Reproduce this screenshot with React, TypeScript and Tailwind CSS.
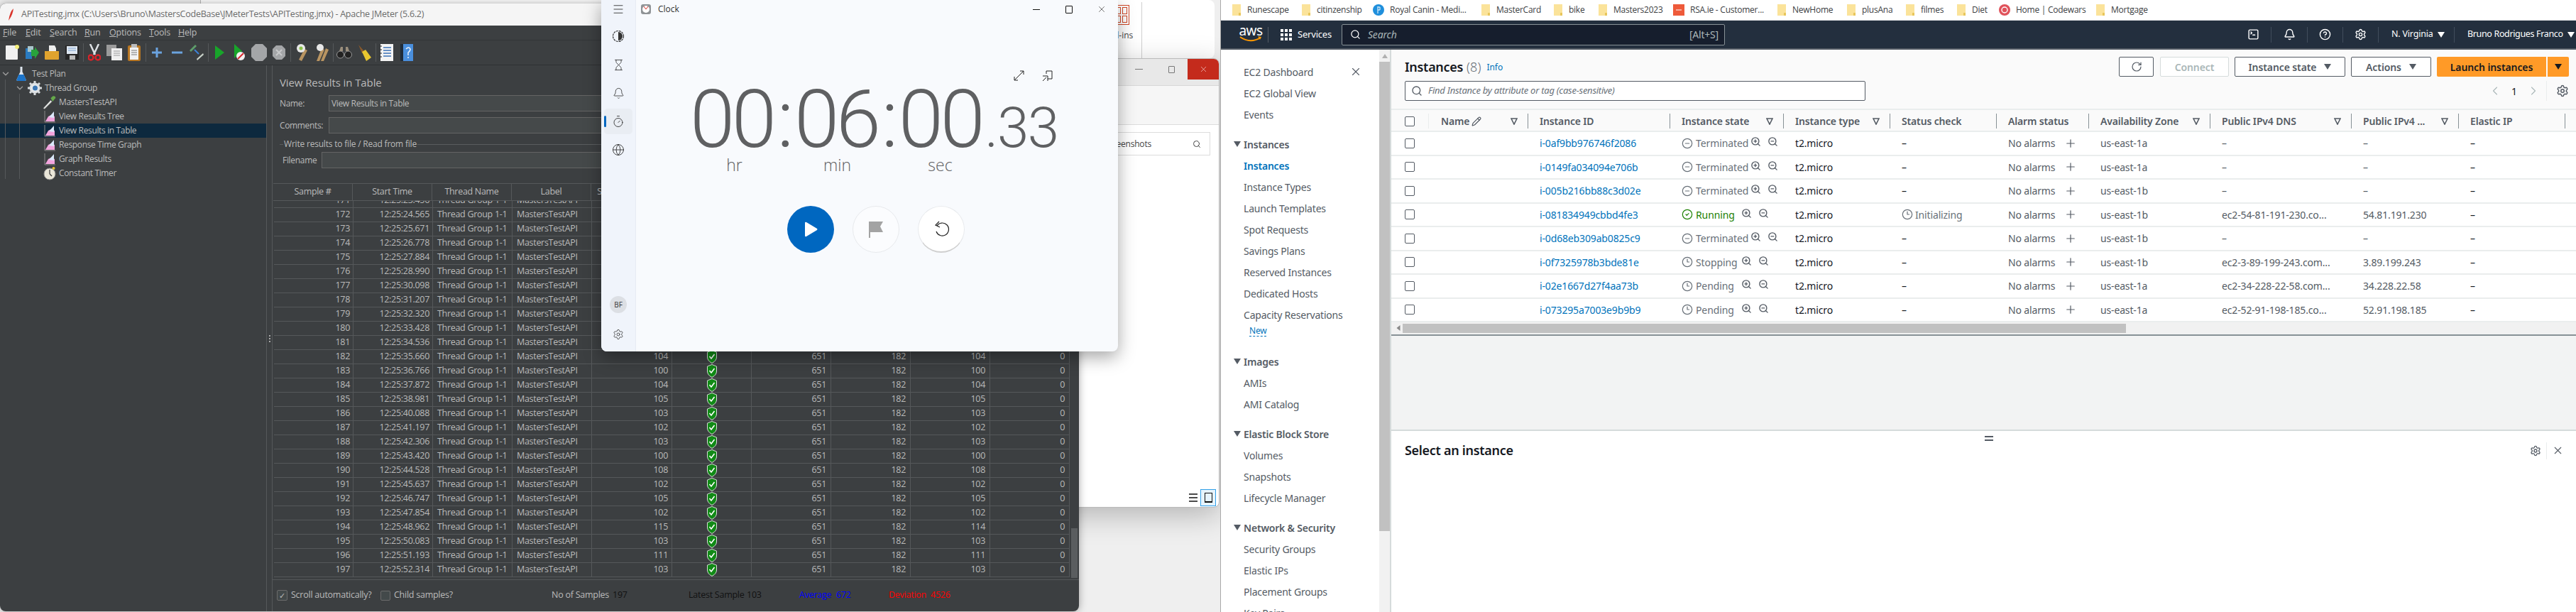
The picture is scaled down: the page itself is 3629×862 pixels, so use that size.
import React from "react";
import { Bell, ChevronDown, ChevronLeft, ChevronRight, CircleCheck, CircleHelp, CircleMinus, Clock3, Globe, Hourglass, Menu, Pencil, Plus, RotateCw, Search, Settings, SquareTerminal, Timer, X, ZoomIn, ZoomOut } from "lucide-react";

const JM = "font-['Open_Sans',sans-serif]";
const AW = "font-['Noto_Sans',sans-serif]";

function Flask() { return <svg width="16" height="22" viewBox="0 0 16 22"><path d="M6.5 1h3v7l5 11q.5 2-1.5 2H3q-2 0-1.5-2l5-11z" fill="#dfe7ef" /><path d="M4.5 12h7l3 7q.5 2-1.5 2H3q-2 0-1.5-2z" fill="#1c74c9" /></svg>; }
function Gear() { return <svg width="20" height="20" viewBox="0 0 20 20"><circle cx="10" cy="10" r="7.5" fill="#d8dcdf" /><g stroke="#d8dcdf" strokeWidth="3"><path d="M10 0v20M0 10h20M3 3l14 14M17 3L3 17" /></g><circle cx="10" cy="10" r="5.5" fill="#e7eaec" /><circle cx="10.500" cy="10" r="3.500" fill="#3b77b5" /></svg>; }
function Dropper() { return <svg width="20" height="20" viewBox="0 0 20 20"><path d="M1 19l11-12 2 2L3 20z" fill="#e9ecea" stroke="#777" strokeWidth=".6" /><path d="M12 4l3-3q2-1 4 1 1 2-1 3l-3 4z" fill="#65a84a" /></svg>; }
function Graph() { return <svg width="16" height="18" viewBox="0 0 16 18"><path d="M1 1v16h15" stroke="#8a8a8a" fill="none" /><path d="M2 16l4-7 4-2 5 2v7z" fill="#f2a4dd" /><path d="M7 10l7-8v9z" fill="#dbe9fb" /></svg>; }
function Stopwatch() { return <svg width="18" height="20" viewBox="0 0 18 20"><circle cx="9" cy="11" r="8" fill="#e9e6d9" stroke="#8d8d8d" /><path d="M9 11V5M9 11l3 3" stroke="#333" strokeWidth="1.2" /><circle cx="14.500" cy="3" r="2" fill="#e5c33a" /></svg>; }
function Shield() { return <svg width="14" height="19" viewBox="0 0 14 19"><path d="M7 .5l6.500 2.500v7q0 5-6.500 8.500Q.5 15 .5 10V3z" fill="#118a16" stroke="#d7dcd7" /><path d="M3.500 9l2.500 3 4.500-6" fill="none" stroke="#fff" strokeWidth="1.600" /></svg>; }

const tools: (React.ReactNode | null)[] = [
  <svg width="19" height="22" viewBox="0 0 19 22"><rect x="0" y="1" width="17" height="20" rx="1" fill="#f1f1f1" /><circle cx="16" cy="3" r="3" fill="#f3ee7a" /></svg>,
  <svg width="20" height="22" viewBox="0 0 20 22"><path d="M1 5h9v15H1z" fill="#2a7bc0" /><path d="M4 2h8v8H4z" fill="#a9c6cc" /><path d="M9 7h5V3l6 8-6 9v-4H9z" fill="#28a33c" /></svg>,
  <svg width="20" height="22" viewBox="0 0 20 22"><path d="M6 1h8l2 4v6H6z" fill="#eee" /><path d="M0 9h20v11q0 1-1 1H1q-1 0-1-1z" fill="#e0a32e" /></svg>,
  <svg width="19" height="22" viewBox="0 0 19 22"><path d="M0 1h19v20H0z" fill="#262626" /><path d="M2 2h15v11H2z" fill="#dfe7f1" /><path d="M6 15h8v6H6z" fill="#bbb" /><path d="M4 5h11M4 8h11" stroke="#7fa4cf" /></svg>,
  null,
  <svg width="18" height="24" viewBox="0 0 18 24"><path d="M3 0l7 15M15 0L8 15" stroke="#dfe2e6" strokeWidth="2.500" /><circle cx="4" cy="19" r="3.500" fill="none" stroke="#d8232a" strokeWidth="2.500" /><circle cx="14" cy="19" r="3.500" fill="none" stroke="#d8232a" strokeWidth="2.500" /></svg>,
  <svg width="22" height="22" viewBox="0 0 22 22"><path d="M0 0h14v16H0z" fill="#9a9a9a" /><path d="M7 5h15v17H7z" fill="#efefef" /><path d="M10 9h9M10 12h9M10 15h9" stroke="#999" /></svg>,
  <svg width="18" height="24" viewBox="0 0 18 24"><rect y="2" width="18" height="22" rx="2" fill="#b87723" /><path d="M3 5h12v17H3z" fill="#f2f2f2" /><path d="M5 9h8M5 12h8M5 15h8" stroke="#777" /><rect x="5" y="0" width="8" height="5" fill="#bbb" /></svg>,
  null,
  <svg width="16" height="16" viewBox="0 0 16 16"><path d="M8 1v14M1 8h14" stroke="#6ba3df" strokeWidth="3" /></svg>,
  <svg width="15" height="6" viewBox="0 0 15 6"><path d="M0 3h15" stroke="#6ba3df" strokeWidth="3" /></svg>,
  <svg width="22" height="24" viewBox="0 0 22 24"><path d="M1 9l8-8 2 2-8 8z" fill="#5e9e6b" /><path d="M12 23l9-8-1-2-9 8z" fill="#c9d2c9" /><path d="M8 8l6 6" stroke="#3c83d8" strokeWidth="2" /></svg>,
  null,
  <svg width="13" height="20" viewBox="0 0 13 20"><path d="M0 0l13 10L0 20z" fill="#18a52a" /></svg>,
  <svg width="15" height="24" viewBox="0 0 15 24"><path d="M0 0l11 10L0 20z" fill="#18a52a" /><circle cx="9" cy="17" r="6" fill="#f1f1f1" /><path d="M5 21l8-8" stroke="#d8232a" strokeWidth="2" /></svg>,
  <svg width="22" height="24" viewBox="0 0 22 24"><path d="M6 0h10l6 6v12l-6 6H6l-6-6V6z" fill="#a4a6a8" /></svg>,
  <svg width="18" height="20" viewBox="0 0 18 20"><path d="M5 0h8l5 5v10l-5 5H5l-5-5V5z" fill="#a4a6a8" /><path d="M5 6l8 8M13 6l-8 8" stroke="#c9cacb" strokeWidth="2" /></svg>,
  null,
  <svg width="20" height="24" viewBox="0 0 20 24"><path d="M6 22l8-15 4 2-8 15z" fill="#b89461" /><circle cx="9" cy="6" r="6" fill="#e8e8e8" /><circle cx="9" cy="6" r="2.500" fill="#8bc34a" /></svg>,
  <svg width="22" height="24" viewBox="0 0 22 24"><path d="M4 24l7-18 4 2-7 16zM10 24l7-18 4 2-7 16z" fill="#b89461" /><circle cx="9" cy="5" r="5" fill="#e8e8e8" /></svg>,
  null,
  <svg width="22" height="18" viewBox="0 0 22 18"><circle cx="5.500" cy="12" r="5" fill="#222" stroke="#999" /><circle cx="16.500" cy="12" r="5" fill="#222" stroke="#999" /><path d="M4 7l2-6h3v6zM18 7l-2-6h-3v6z" fill="#9a8e7c" /></svg>,
  <svg width="20" height="24" viewBox="0 0 20 24"><path d="M2 1l8 9-3 3z" fill="#8b5a2b" /><path d="M7 11l5-3 8 11-7 5z" fill="#e9c62f" /></svg>,
  null,
  <svg width="20" height="24" viewBox="0 0 20 24"><rect x="1" width="18" height="24" fill="#f4f4f4" /><path d="M5 5h11M5 9h11M5 13h11M5 17h11" stroke="#3a70b5" strokeWidth="1.500" /><path d="M0 3h3M0 8h3M0 13h3M0 18h3" stroke="#222" /></svg>,
  <svg width="18" height="24" viewBox="0 0 18 24"><rect width="18" height="24" fill="#4a8fdd" /><rect width="4" height="24" fill="#1f2c3a" /><path d="M8 7q4-4 6 0 0 3-3 5v4" fill="none" stroke="#eaf2fb" strokeWidth="1.500" /><path d="M11 18v2" stroke="#eaf2fb" strokeWidth="1.500" /></svg>,
];

const times = ["23.456", "24.565", "25.671", "26.778", "27.884", "28.990", "30.098", "31.207", "32.320", "33.428", "34.536", "35.660", "36.766", "37.872", "38.981", "40.088", "41.197", "42.306", "43.420", "44.528", "45.637", "46.747", "47.854", "48.962", "50.083", "51.193", "52.314"];
const sampleTimes = [104, 104, 103, 101, 102, 103, 104, 105, 100, 102, 103, 104, 100, 104, 105, 103, 102, 103, 100, 108, 102, 105, 102, 115, 103, 111, 103];

const treeRows = [
  { t: "MastersTestAPI", i: <Dropper /> },
  { t: "View Results Tree", i: <Graph /> },
  { t: "View Results in Table", i: <Graph />, sel: true },
  { t: "Response Time Graph", i: <Graph /> },
  { t: "Graph Results", i: <Graph /> },
  { t: "Constant Timer", i: <Stopwatch /> },
];

function JMeter() {
  return (
    <div className={`absolute left-0 top-[5px] bottom-px w-[1520px] rounded-lg overflow-hidden flex flex-col bg-[#3c3f41] text-[#bbbbbb] text-[12px] ${JM} shadow-[0_0_12px_rgba(0,0,0,0.35)]`}>
      <div className="h-[31px] shrink-0 bg-[#f5f5f5] flex items-center pl-[11px] gap-[10px] text-[#6b6b6b] text-[12.5px] tracking-[-0.25px]">
        <svg width="9" height="18" viewBox="0 0 9 18"><path d="M8 0Q3 4 1 17l2-3Q7 8 8 0z" fill="#d9342b" /></svg>
        <span>APITesting.jmx (C:\Users\Bruno\MastersCodeBase\JMeterTests\APITesting.jmx) - Apache JMeter (5.6.2)</span>
      </div>
      <div className="h-[21px] shrink-0 flex items-center pl-[4px] text-[12.5px] tracking-[-0.2px] border-b border-[#333638]">
        {[["F", "ile", "w-[32px]"], ["E", "dit", "w-[34px]"], ["S", "earch", "w-[49px]"], ["R", "un", "w-[35px]"], ["O", "ptions", "w-[56px]"], ["T", "ools", "w-[41px]"], ["H", "elp", "w-[40px]"]].map(([a, b, w]) => (
          <span key={a} className={w}><span className="underline">{a}</span>{b}</span>
        ))}
      </div>
      <div className="h-[35px] shrink-0 flex items-center pl-[3px] border-b border-[#2f3133]">
        {tools.map((t, i) => t === null ? (
          <div key={i} className="w-[4px] h-[26px] flex justify-center"><div className="w-px h-full bg-[#55585a]" /></div>
        ) : (
          <div key={i} className="w-[28px] flex justify-center items-center">{t}</div>
        ))}
      </div>
      <div className="flex flex-1 min-h-0">
        <div className="w-[375px] shrink-0 relative pt-[2px] text-[12px] tracking-[-0.35px]">
          <div className="absolute left-[7px] top-[20px] h-[140px] w-px bg-[#55585a]" />
          <div className="absolute left-[27px] top-[40px] h-[120px] w-px bg-[#55585a]" />
          <div className="h-[20px] flex items-center pl-[1px]"><ChevronDown size={14} strokeWidth={2.5} className="text-[#9a9a9a]" /><div className="w-[30px] flex justify-center"><Flask /></div><span>Test Plan</span></div>
          <div className="h-[20px] flex items-center pl-[21px]"><ChevronDown size={14} strokeWidth={2.5} className="text-[#9a9a9a]" /><div className="w-[28px] flex justify-center"><Gear /></div><span>Thread Group</span></div>
          {treeRows.map((r) => (
            <div key={r.t} className={`h-[20px] flex items-center pl-[60px] gap-[4px] ${r.sel ? "bg-[#0d293e]" : ""}`}>
              <div className="w-[19px] flex justify-center">{r.i}</div><span>{r.t}</span>
            </div>
          ))}
        </div>
        <div className="w-[9px] shrink-0 border-l border-r border-[#55585a] flex flex-col items-center gap-[2px] justify-center">
          <i className="w-[2px] h-[2px] bg-[#aaa]" /><i className="w-[2px] h-[2px] bg-[#aaa]" /><i className="w-[2px] h-[2px] bg-[#aaa]" />
        </div>
        <div className="flex-1 min-w-0 flex flex-col">
          <div className="h-[166px] shrink-0 relative pl-[10px] pr-[2px] pt-[13px]">
            <div className="text-[15px] leading-[22px] tracking-[-0.1px]">View Results in Table</div>
            <div className="flex items-center h-[23px] mt-[7px] text-[12px] tracking-[-0.35px]"><span className="w-[69px]">Name:</span><div className="flex-1 h-full border border-[#646464] bg-[#45494a] pl-[3px] flex items-center">View Results in Table</div></div>
            <div className="flex items-center h-[23px] mt-[8px] text-[12px] tracking-[-0.35px]"><span className="w-[69px]">Comments:</span><div className="flex-1 h-full border border-[#646464] bg-[#45494a]" /></div>
            <div className="flex items-center h-[18px] mt-[6px] text-[12px] tracking-[-0.2px] gap-[1px]"><div className="w-[5px] h-px bg-[#5a5d5f]" /><span>Write results to file / Read from file</span><div className="flex-1 h-px bg-[#5a5d5f]" /></div>
            <div className="flex items-center h-[23px] mt-[2px] pl-[4px] text-[12px] tracking-[-0.3px]"><span className="w-[55px]">Filename</span><div className="flex-1 h-full border border-[#646464] bg-[#45494a]" /></div>
          </div>
          <div className="grid grid-cols-[112px_112px_112px_112px_113px_112px_112px_112px_112px_112px] h-[25px] shrink-0 ml-px mr-[12px] border-y border-[#55585a] text-[12.5px] tracking-[-0.3px]">
            {["Sample #", "Start Time", "Thread Name", "Label", "Sample Time(ms)", "Status", "Bytes", "Sent Bytes", "Latency", "Connect Time(ms)"].map((h) => (
              <div key={h} className="border-r border-[#55585a] flex items-center justify-center whitespace-nowrap overflow-hidden">{h}</div>
            ))}
          </div>
          <div className="h-[531px] shrink-0 overflow-hidden flex">
            <div className="flex-1 ml-[2px] -mt-[10px]">
              {times.map((t, i) => (
                <div key={t} className="grid grid-cols-[112px_112px_112px_112px_113px_112px_112px_112px_112px_112px] h-[20px] items-center border-b border-[#55585a] text-[12.5px] tracking-[-0.3px] [&>div]:h-full [&>div]:flex [&>div]:items-center [&>div]:border-r [&>div]:border-[#55585a]">
                  <div className="justify-end pr-[4px]">{171 + i}</div>
                  <div className="justify-end pr-[4px]">{`12:25:${t}`}</div>
                  <div className="pl-[6px]">Thread Group 1-1</div>
                  <div className="pl-[6px]">MastersTestAPI</div>
                  <div className="justify-end pr-[5px]">{sampleTimes[i]}</div>
                  <div className="justify-center"><Shield /></div>
                  <div className="justify-end pr-[6px]">651</div>
                  <div className="justify-end pr-[6px]">182</div>
                  <div className="justify-end pr-[6px]">{sampleTimes[i] === 115 ? 114 : sampleTimes[i]}</div>
                  <div className="justify-end pr-[6px]">0</div>
                </div>
              ))}
            </div>
            <div className="w-[13px] shrink-0 flex flex-col justify-end pl-[2px] pr-[2px]"><div className="h-[70px] bg-[#5a5d5f]" /></div>
          </div>
          <div className="flex-1 border-t border-[#55585a] mt-[2px] flex items-center pl-[6px] text-[12.5px] tracking-[-0.25px] pb-[1px]">
            <span className="w-[15px] h-[15px] rounded-[2px] border border-[#6b6b6b] bg-[#43494a] flex items-center justify-center text-[11px] leading-none">✓</span>
            <span className="ml-[5px] w-[126px]">Scroll automatically?</span>
            <span className="w-[14px] h-[14px] rounded-[2px] border border-[#6b6b6b] bg-[#43494a]" />
            <span className="ml-[5px] w-[222px]">Child samples?</span>
            <span className="w-[86px]">No of Samples</span><span className="text-[#111] w-[107px]">197</span>
            <span className="text-[#111] w-[82px]">Latest Sample</span><span className="text-[#111] w-[74px]">103</span>
            <span className="text-[#0000ff] w-[52px]">Average</span><span className="text-[#0000ff] w-[74px]">672</span>
            <span className="text-[#ff0000] w-[59px]">Deviation</span><span className="text-[#ff0000]">4526</span>
          </div>
        </div>
      </div>
    </div>
  );
}

function ClockWin() {
  const rail = [<Hourglass key="f" size={17} strokeWidth={1.2} />, <Bell key="b" size={17} strokeWidth={1.2} />, <Timer key="t" size={18} strokeWidth={1.2} />, <Globe key="g" size={18} strokeWidth={1.2} />];
  return (
    <div className={`absolute left-[847px] top-0 w-[728px] h-[495px] rounded-b-lg flex bg-[#f8fafd] text-[#222] shadow-[0_8px_24px_rgba(0,0,0,0.35)] overflow-hidden ${JM}`}>
      <div className="w-[49px] shrink-0 bg-[#f0f4fb] border-r border-[#e6ebf3] flex flex-col items-center text-[#333]">
        <div className="h-[26px] flex items-center"><Menu size={18} strokeWidth={1.2} /></div>
        <div className="h-[40px] mt-[5px] flex items-center justify-center">
          <svg width="18" height="18" viewBox="0 0 18 18"><circle cx="9" cy="9" r="7.500" fill="none" stroke="#333" strokeWidth="1.200" strokeDasharray="3 1" /><path d="M9 3a6 6 0 0 1 0 12z" fill="#333" /></svg>
        </div>
        <div className="h-[40px] flex items-center">{rail[0]}</div>
        <div className="h-[40px] flex items-center">{rail[1]}</div>
        <div className="h-[40px] flex items-center"><div className="relative w-[40px] h-[36px] rounded-[5px] bg-[#e9edf3] flex items-center justify-center">{rail[2]}<div className="absolute left-0 top-[10px] h-[16px] w-[3px] rounded bg-[#0067c0]" /></div></div>
        <div className="h-[40px] flex items-center">{rail[3]}</div>
        <div className="mt-auto w-[24px] h-[24px] rounded-full bg-[#dcdfe4] flex items-center justify-center text-[10px]">BF</div>
        <div className="mt-[22px] mb-[16px]"><Settings size={16} strokeWidth={1.2} /></div>
      </div>
      <div className="flex-1 flex flex-col min-w-0">
        <div className="h-[26px] shrink-0 flex items-center pl-[7px] text-[12px]">
          <svg width="14" height="16" viewBox="0 0 14 16" className="mr-[10px]"><rect y="1" width="14" height="14" rx="3" fill="#8f9396" /><circle cx="7" cy="8" r="5" fill="#fff" /><path d="M7 8L4 4M7 8l3-4" stroke="#d9342b" /></svg>
          <span className="text-[#333]">Clock</span>
          <div className="ml-auto flex items-center text-[#111]">
            <div className="w-[46px] flex justify-center"><div className="w-[10px] h-[1px] bg-[#111]" /></div>
            <div className="w-[46px] flex justify-center"><div className="w-[10px] h-[11px] border border-[#111] rounded-[1px]" /></div>
            <div className="w-[46px] flex justify-center"><X size={14} strokeWidth={1} /></div>
          </div>
        </div>
        <div className="h-[20px] mt-[72px] shrink-0 flex justify-end pr-[91px] gap-[23px] text-[#222]">
          <svg width="17" height="17" viewBox="0 0 17 17" fill="none" stroke="#222"><path d="M2 10v5h5M15 7V2h-5M2 15L15 2" /></svg>
          <svg width="17" height="17" viewBox="0 0 17 17" fill="none" stroke="#222"><path d="M7 2h8v11H9M2 9h7v7M2 16l5-5M7 2v4" /></svg>
        </div>
        <div className="mt-[5px] ml-[76px] h-[90px] flex items-baseline text-[#5f6062] font-['Roboto',sans-serif] font-light leading-[90px] whitespace-nowrap">
          <span className="text-[114px] tracking-[-4.5px]">00<span className="mx-[5px]">:</span>06<span className="mx-[5px]">:</span>00</span>
          <span className="text-[80px] ml-[4px] tracking-[-1.5px]">.33</span>
        </div>
        <div className="grid grid-cols-[145px_145px_145px] ml-[66px] mt-[4px] text-[#5f6062] text-[23px] leading-[30px] text-center font-light">
          <span>hr</span><span>min</span><span>sec</span>
        </div>
        <div className="flex ml-[213px] mt-[43px] gap-[26px]">
          <div className="w-[66px] h-[66px] rounded-full bg-[#0067c0] flex items-center justify-center"><svg width="22" height="24" viewBox="0 0 22 24"><path d="M3 3q0-2 2-1l15 9q1 1 0 2L5 22q-2 1-2-1z" fill="#fff" /></svg></div>
          <div className="w-[66px] h-[66px] rounded-full bg-[#fbfcfe] border border-[#e8eaed] flex items-center justify-center"><svg width="22" height="26" viewBox="0 0 22 26"><path d="M2 2h19l-4 7 4 8H3v8H1V2z" fill="#a3a3a3" /></svg></div>
          <div className="w-[66px] h-[66px] rounded-full bg-white border border-[#e8eaed] border-b-2 border-b-[#cfcfcf] flex items-center justify-center"><svg width="24" height="26" viewBox="0 0 24 26" fill="none" stroke="#222" strokeWidth="1.200"><path d="M6 8a9 9 0 1 1-1 8" /><path d="M9 2L4 7l6 3" /></svg></div>
        </div>
      </div>
    </div>
  );
}

function Behind() {
  return (
    <>
      <div className={`absolute left-[282px] top-0 w-[1429px] h-[82px] bg-white border-l border-[#bbb] rounded-tr-lg rounded-br-lg flex justify-end text-[#444] text-[12px] ${JM}`}>
        <div className="flex flex-col w-[136px] items-start relative">
          <div className="mt-[7px] -ml-[16px] w-[32px] h-[28px] border border-[#d24726] grid grid-rows-2 grid-cols-3 p-[2px] gap-[2px]"><div className="border border-[#d24726]" /><div className="border border-[#d24726]" /><div className="border border-[#d24726]" /><div className="border border-[#d24726]" /><div className="border border-[#d24726]" /><div className="border border-[#d24726]" /></div>
          <span className="mt-[6px] -ml-[6px]">d-ins</span>
          <div className="absolute left-[33px] top-[3px] h-[79px] w-px bg-[#d0d0d0]" />
        </div>
      </div>
      <div className="absolute left-[1400px] top-[82px] w-[318px] h-[633px] bg-white rounded-t-lg rounded-br-lg border border-[#bbb] shadow-[0_10px_40px_rgba(0,0,0,0.25)] flex flex-col text-[#444] overflow-hidden">
        <div className="h-[38px] shrink-0 bg-[#e8e8e8] flex justify-end items-start border-b border-[#d8d8d8]">
          <div className="w-[46px] h-[29px] flex items-center justify-center"><div className="w-[11px] h-px bg-[#777]" /></div>
          <div className="w-[46px] h-[29px] flex items-center justify-center"><div className="w-[9px] h-[10px] border border-[#777] rounded-[1px]" /></div>
          <div className="w-[44px] h-[29px] bg-[#c42b1c] flex items-center justify-center"><X size={13} strokeWidth={1} className="text-white" /></div>
        </div>
        <div className="h-[55px] shrink-0 bg-[#f6f6f6] border-b border-[#dcdcdc]" />
        <div className={`h-[33px] mt-[10px] ml-[-5px] mr-[12px] shrink-0 border border-[#dcdcdc] flex items-center justify-end pr-[12px] text-[12px] tracking-[-0.2px] ${JM}`}>
          <span className="mr-[58px]">Screenshots</span><Search size={12} />
        </div>
        <div className="mt-auto flex justify-end items-center gap-[2px] pr-[4px] pb-[1px]">
          <svg width="16" height="16" viewBox="0 0 16 16"><path d="M2 3h12M2 8h12M2 13h12" stroke="#111" strokeWidth="1.400" /></svg>
          <div className="w-[22px] h-[24px] border border-[#30a0e8] bg-[#e5f3fd] flex items-center justify-center"><div className="w-[11px] h-[14px] border border-[#111] border-b-2" /></div>
        </div>
      </div>
    </>
  );
}

const marks = [
  ["f", "Runescape", "w-[98px]"], ["f", "citinzenship", "w-[101px]"], ["r", "Royal Canin - Medi...", "w-[152px]"], ["f", "MasterCard", "w-[102px]"], ["f", "bike", "w-[63px]"], ["f", "Masters2023", "w-[106px]"], ["s", "RSA.ie - Customer...", "w-[146px]"], ["f", "NewHome", "w-[98px]"], ["f", "plusAna", "w-[83px]"], ["f", "filmes", "w-[72px]"], ["f", "Diet", "w-[60px]"], ["c", "Home | Codewars", "w-[136px]"], ["f", "Mortgage", "w-[90px]"],
];

function MarkIcon({ k }: { k: string }) {
  if (k === "r") return <svg width="16" height="16" viewBox="0 0 16 16"><circle cx="8" cy="8" r="8" fill="#1f8fdc" /><path d="M7 3v10M7 4h3v4H7" stroke="#fff" fill="none" /></svg>;
  if (k === "s") return <svg width="16" height="16" viewBox="0 0 16 16"><rect width="16" height="16" fill="#ee5a3a" /><path d="M4 8h8" stroke="#fff" /></svg>;
  if (k === "c") return <svg width="16" height="16" viewBox="0 0 16 16"><circle cx="8" cy="8" r="8" fill="#e0525b" /><circle cx="8" cy="8" r="4" fill="none" stroke="#fff" strokeWidth="1.400" /></svg>;
  return <svg width="14" height="16" viewBox="0 0 14 16"><path d="M1 0h12v16H1z" fill="#fbe39a" /><path d="M10 12h3v4h-3z" fill="#e8c65c" /></svg>;
}

const sideNav: { g?: string; items: { t: string; blue?: boolean }[]; bold?: boolean }[] = [
  { items: [{ t: "EC2 Global View" }, { t: "Events" }] },
  { g: "Instances", items: [{ t: "Instances", blue: true }, { t: "Instance Types" }, { t: "Launch Templates" }, { t: "Spot Requests" }, { t: "Savings Plans" }, { t: "Reserved Instances" }, { t: "Dedicated Hosts" }, { t: "Capacity Reservations" }] },
  { g: "Images", items: [{ t: "AMIs" }, { t: "AMI Catalog" }] },
  { g: "Elastic Block Store", items: [{ t: "Volumes" }, { t: "Snapshots" }, { t: "Lifecycle Manager" }] },
  { g: "Network & Security", items: [{ t: "Security Groups" }, { t: "Elastic IPs" }, { t: "Placement Groups" }, { t: "Key Pairs" }] },
];

const cols = "grid grid-cols-[52px_140px_200px_160px_150px_150px_130px_171px_199px_151px_150px_16px]";
const headers: [string, boolean][] = [["Instance ID", false], ["Instance state", true], ["Instance type", true], ["Status check", false], ["Alarm status", false], ["Availability Zone", true], ["Public IPv4 DNS", true], ["Public IPv4 ...", true], ["Elastic IP", false]];
const rows = [
  ["i-0af9bb976746f2086", "Terminated", "us-east-1a", "–", "–"],
  ["i-0149fa034094e706b", "Terminated", "us-east-1a", "–", "–"],
  ["i-005b216bb88c3d02e", "Terminated", "us-east-1b", "–", "–"],
  ["i-081834949cbbd4fe3", "Running", "us-east-1b", "ec2-54-81-191-230.co...", "54.81.191.230"],
  ["i-0d68eb309ab0825c9", "Terminated", "us-east-1b", "–", "–"],
  ["i-0f7325978b3bde81e", "Stopping", "us-east-1b", "ec2-3-89-199-243.com...", "3.89.199.243"],
  ["i-02e1667d27f4aa73b", "Pending", "us-east-1a", "ec2-34-228-22-58.com...", "34.228.22.58"],
  ["i-073295a7003e9b9b9", "Pending", "us-east-1a", "ec2-52-91-198-185.co...", "52.91.198.185"],
];

function Filter() { return <svg width="10" height="10" viewBox="0 0 10 10"><path d="M1 1h8L5 9z" fill="none" stroke="#545b64" strokeWidth="1.600" /></svg>; }
function Caret({ c = "#545b64" }: { c?: string }) { return <svg width="10" height="8" viewBox="0 0 10 8"><path d="M0 0h10L5 8z" fill={c} /></svg>; }
function Check() { return <div className="w-[14px] h-[14px] rounded-[2px] border border-[#545b64] bg-white" />; }

function StateCell({ s }: { s: string }) {
  const term = s === "Terminated";
  return (
    <div className="flex items-center pl-[17px] text-[14px] text-[#687078]">
      {term ? <CircleMinus size={16} strokeWidth={1.8} className="text-[#687078] shrink-0" /> : s === "Running" ? <CircleCheck size={16} strokeWidth={1.8} className="text-[#1d8102] shrink-0" /> : <Clock3 size={16} strokeWidth={1.8} className="text-[#687078] shrink-0" />}
      <span className={`ml-[4px] tracking-[-0.1px] ${s === "Running" ? "text-[#1d8102]" : ""} ${term ? "w-[72px]" : "w-[58px]"}`}>{s}</span>
      <div className={`flex text-[#545b64] gap-[9px] -mt-[4px] ${term ? "ml-[5px]" : "ml-[6px]"}`}><ZoomIn size={15} strokeWidth={2.2} /><ZoomOut size={15} strokeWidth={2.2} /></div>
    </div>
  );
}

function Browser() {
  return (
    <div className={`absolute left-[1719px] top-0 right-0 h-full bg-white border-l border-[#a9a9a9] flex flex-col overflow-hidden ${AW}`}>
      <div className="h-[29px] shrink-0 flex items-center pl-[15px] border-b border-[#dfe1e5] text-[12px] text-[#3c4043] font-['Open_Sans',sans-serif] tracking-[-0.25px]">
        {marks.map(([k, t, w]) => (
          <div key={t} className={`${w} shrink-0 flex items-center gap-[8px] whitespace-nowrap`}><MarkIcon k={k} /><span>{t}</span></div>
        ))}
      </div>
      <div className="h-[41px] shrink-0 bg-[#232f3e] border-b-2 border-[#545b64] flex items-center text-white text-[13px] tracking-[-0.2px]">
        <div className="w-[66px] flex flex-col items-center pl-[18px] leading-none -mt-[2px]">
          <span className="text-[19px] font-normal leading-[16px] tracking-[-0.5px]">aws</span>
          <svg width="32" height="9" viewBox="0 0 32 9"><path d="M1 1q14 10 29 1" fill="none" stroke="#ff9900" strokeWidth="2" /><path d="M26 0l5 1-2 4" fill="#ff9900" /></svg>
        </div>
        <div className="w-px h-[22px] bg-[#545b64]" />
        <div className="ml-[17px] grid grid-cols-3 gap-[2px]">{Array.from({ length: 9 }).map((_, i) => <i key={i} className="w-[4px] h-[4px] bg-white" />)}</div>
        <span className="ml-[8px] w-[62px]">Services</span>
        <div className="w-[540px] h-[30px] bg-[#161e2d] border border-[#879196] rounded-[2px] flex items-center pl-[11px] pr-[8px] text-[#aab7b8] text-[14px]">
          <Search size={15} className="text-white" />
          <span className="ml-[10px] italic">Search</span><span className="ml-auto">[Alt+S]</span>
        </div>
        <div className="ml-auto flex items-center h-full">
          <div className="w-[50px] flex justify-center"><SquareTerminal size={17} strokeWidth={2} /></div>
          <div className="w-px h-[22px] bg-[#414d5c]" />
          <div className="w-[50px] flex justify-center"><Bell size={17} strokeWidth={2} /></div>
          <div className="w-px h-[22px] bg-[#414d5c]" />
          <div className="w-[49px] flex justify-center"><CircleHelp size={17} strokeWidth={2} /></div>
          <div className="w-px h-[22px] bg-[#414d5c]" />
          <div className="w-[49px] flex justify-center"><Settings size={17} strokeWidth={2} /></div>
          <div className="w-px h-[22px] bg-[#414d5c]" />
          <div className="w-[106px] pl-[18px] flex items-center gap-[6px] whitespace-nowrap text-[12.5px]"><span>N. Virginia</span><Caret c="#fff" /></div>
          <div className="w-px h-[22px] bg-[#414d5c]" />
          <div className="w-[171px] pl-[18px] flex items-center gap-[6px] whitespace-nowrap text-[12.5px] tracking-[-0.35px]"><span>Bruno Rodrigues Franco</span><Caret c="#fff" /></div>
        </div>
      </div>
      <div className="flex flex-1 min-h-0">
        <div className="w-[223px] shrink-0 pt-[16px] pl-[32px] overflow-hidden text-[#545b64] text-[14px] tracking-[-0.2px]">
          <div className="h-[30px] flex items-center justify-between pr-[24px]"><span>EC2 Dashboard</span><X size={18} strokeWidth={1.5} className="text-[#545b64]" /></div>
          {sideNav.map((s, i) => (
            <div key={i} className={s.g === "Instances" ? "mt-[12px] pb-[8px]" : s.g ? "mt-[12px]" : ""}>
              {s.g && (
                <div className="h-[30px] -ml-[14px] flex items-center gap-[4px] font-semibold text-[#545b64]"><Caret /><span>{s.g}</span></div>
              )}
              {s.items.map((it) => (
                <div key={it.t} className={`h-[30px] flex items-center whitespace-nowrap ${it.blue ? "text-[#0073bb] font-semibold" : ""}`}>{it.t}</div>
              ))}
              {s.g === "Instances" && <div className="h-[16px] ml-[8px] text-[#0073bb] text-[12px] leading-[16px] w-fit border-b border-dashed border-[#0073bb]">New</div>}
            </div>
          ))}
        </div>
        <div className="w-[16px] shrink-0 bg-[#f1f1f1] flex flex-col border-r border-[#d5dbdb]">
          <div className="h-[17px] flex items-center justify-center"><svg width="8" height="6" viewBox="0 0 8 6"><path d="M4 0l4 6H0z" fill="#b0b0b0" /></svg></div>
          <div className="h-[661px] bg-[#c1c1c1]" />
        </div>
        <div className="w-px shrink-0 bg-[#d5dbdb]" />
        <div className="flex-1 min-w-0 flex flex-col bg-[#f2f3f3]">
          <div className="h-[83px] shrink-0 bg-[#fafafa] pl-[19px] pr-[10px] pt-[10px] relative">
            <div className="flex items-center h-[28px]">
              <span className="text-[18px] font-semibold text-[#16191f] tracking-[-0.3px]">Instances</span>
              <span className="ml-[5px] text-[18px] text-[#687078] font-light">(8)</span>
              <span className="ml-[8px] text-[12px] text-[#0073bb] mt-[2px]">Info</span>
              <div className="ml-auto flex items-center text-[14px] font-semibold tracking-[-0.1px]">
                <div className="w-[49px] h-[28px] mr-[9px] bg-white border border-[#545b64] rounded-[2px] flex items-center justify-center"><RotateCw size={16} strokeWidth={1.8} className="text-[#545b64]" /></div>
                <div className="w-[97px] h-[28px] mr-[8px] bg-white border border-[#d5dbdb] rounded-[2px] flex items-center justify-center text-[#aab7b8]">Connect</div>
                <div className="w-[156px] h-[28px] mr-[8px] bg-white border border-[#545b64] rounded-[2px] flex items-center justify-center gap-[11px] text-[#545b64]">Instance state<Caret /></div>
                <div className="w-[113px] h-[28px] mr-[8px] bg-white border border-[#545b64] rounded-[2px] flex items-center justify-center gap-[11px] text-[#545b64]">Actions<Caret /></div>
                <div className="w-[154px] h-[28px] bg-[#ff9a27] rounded-l-[2px] flex items-center justify-center text-[#16191f]">Launch instances</div>
                <div className="w-[30px] h-[28px] ml-[2px] bg-[#ff9a27] rounded-r-[2px] flex items-center justify-center"><Caret c="#16191f" /></div>
              </div>
            </div>
            <div className="flex items-center h-[28px] mt-[6px]">
              <div className="w-[649px] h-[28px] bg-white border border-[#545b64] rounded-[2px] flex items-center pl-[8px] gap-[8px] text-[#687078] text-[13px] italic tracking-[-0.25px]"><Search size={16} className="text-[#545b64] not-italic" /><span>Find Instance by attribute or tag (case-sensitive)</span></div>
              <div className="ml-auto flex items-center text-[#16191f] text-[14px]">
                <ChevronLeft size={20} strokeWidth={1.3} className="text-[#aab7b8]" />
                <span className="w-[34px] text-center">1</span>
                <ChevronRight size={20} strokeWidth={1.3} className="text-[#aab7b8]" />
                <div className="w-px h-[28px] bg-[#eaeded] ml-[8px]" />
                <Settings size={18} strokeWidth={2} className="ml-[13px] text-[#545b64]" />
              </div>
            </div>
          </div>
          <div className={`${cols} h-[33px] shrink-0 bg-[#fafafa] border-y-2 border-[#eaeded] text-[14px] font-semibold text-[#545b64] tracking-[-0.15px]`}>
            <div className="pl-[19px] flex items-center"><Check /></div>
            <div className="my-[5px] border-l border-[#eaeded] pl-[17px] pr-[14px] flex items-center justify-between"><span className="flex items-center gap-[3px]">Name <Pencil size={14} strokeWidth={2} /></span><Filter /></div>
            {headers.map(([h, f]) => (
              <div key={h} className="my-[5px] border-l border-[#879196] pl-[16px] pr-[14px] flex items-center justify-between whitespace-nowrap"><span>{h}</span>{f && <Filter />}</div>
            ))}
            <div className="my-[5px] border-l border-[#879196]" />
          </div>
          {rows.map((r, i) => (
            <div key={r[0]} className={`${cols} h-[33.5px] shrink-0 bg-white border-b-2 border-[#eaeded] text-[14px] text-[#16191f] tracking-[-0.15px] [&>div]:flex [&>div]:items-center`}>
              <div className="pl-[19px]"><Check /></div>
              <div />
              <div className="pl-[17px] text-[#0073bb]">{r[0]}</div>
              <StateCell s={r[1]} />
              <div className="pl-[17px]">t2.micro</div>
              <div className="pl-[17px]">{i === 3 ? <span className="flex items-center gap-[3px] text-[#687078]"><Clock3 size={16} strokeWidth={1.8} />Initializing</span> : "–"}</div>
              <div className="pl-[17px] whitespace-nowrap text-[#545b64]">No alarms<Plus size={18} strokeWidth={1.6} className="ml-[13px] text-[#545b64]" /></div>
              <div className="pl-[17px] text-[#545b64]">{r[2]}</div>
              <div className="pl-[17px] whitespace-nowrap text-[#545b64]">{r[3]}</div>
              <div className="pl-[17px] text-[#545b64]">{r[4]}</div>
              <div className="pl-[17px]">–</div>
              <div />
            </div>
          ))}
          <div className="h-[19px] shrink-0 bg-[#f1f1f1] border-b-2 border-[#879196] flex items-center pl-[4px] pb-[1px]">
            <svg width="12" height="8" viewBox="0 0 5 8"><path d="M5 0v8L0 4z" fill="#888" /></svg>
            <div className="ml-0 w-[1019px] h-[13px] bg-[#c1c1c1]" />
          </div>
          <div className="flex-1" />
          <div className="h-[257px] shrink-0 bg-white border-t-2 border-[#d5dbdb]">
            <div className="flex justify-center"><div className="w-[12px] h-[7px] mt-[7px] border-y-2 border-[#545b64] ml-[15px]" /></div>
            <div className="flex items-center pl-[19px] pr-[17px]">
              <span className="text-[18px] font-semibold text-[#16191f] tracking-[-0.3px]">Select an instance</span>
              <div className="ml-auto flex items-center text-[#545b64]"><Settings size={16} strokeWidth={2} /><div className="w-px h-[24px] bg-[#eaeded] mx-[7px]" /><X size={17} strokeWidth={1.5} /></div>
            </div>
          </div>
        </div>
      </div>
    </div>
  );
}

export default function App() {
  return (
    <div className="relative w-[3629px] h-[862px] overflow-hidden bg-[#efefef]">
      <Behind />
      <JMeter />
      <ClockWin />
      <Browser />
    </div>
  );
}
